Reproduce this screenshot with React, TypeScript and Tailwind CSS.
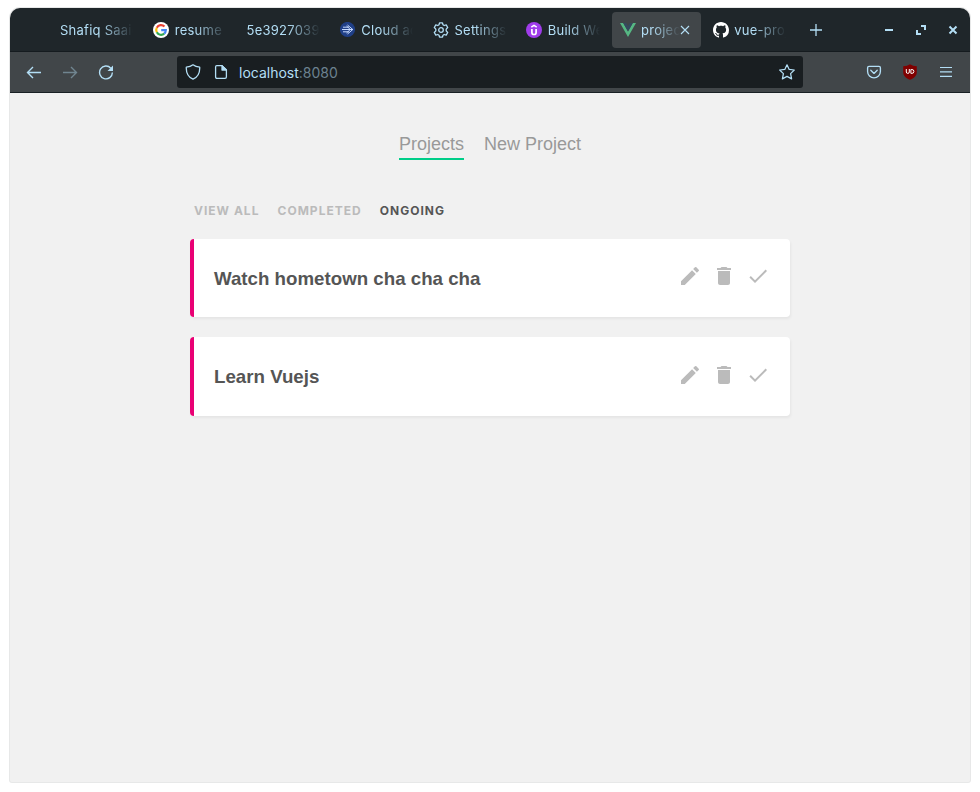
import React from 'react';

type Tab = { title: string; icon?: React.ReactNode; active?: boolean };

const GoogleIcon = () => (
  <svg width="16" height="16" viewBox="0 0 16 16">
    <circle cx="8" cy="8" r="8" fill="#fff" />
    <g fill="none" strokeWidth="2.2">
      <path d="M11.5 4.6A4.8 4.8 0 0 0 3.8 5.7" stroke="#ea4335" />
      <path d="M3.8 5.7A4.8 4.8 0 0 0 3.8 10.3" stroke="#fbbc05" />
      <path d="M3.8 10.3A4.8 4.8 0 0 0 11.2 11.6" stroke="#34a853" />
      <path d="M11.2 11.6A4.8 4.8 0 0 0 12.8 8.2H8.2" stroke="#4285f4" />
    </g>
  </svg>
);

const CloudIcon = () => (
  <svg width="16" height="16" viewBox="0 0 16 16">
    <circle cx="7.5" cy="7.5" r="7.6" fill="#1f3f87" />
    <path d="M3 5.2H9M2 7.5H13M3 9.8H9M7.5 3L12.8 7.5L7.5 12M6.5 4L10.3 7.5L6.5 11" fill="none" stroke="#c3d8ff" strokeWidth="1" />
  </svg>
);

const GearIcon = () => (
  <svg width="16" height="16" viewBox="0 0 16 16" fill="none" stroke="#b3def5" strokeWidth="1.3" strokeLinejoin="round">
    <path d="M6.5.8h3l.5 2 1.2.7 2-.6 1.5 2.6-1.5 1.6v1.8l1.5 1.6-1.5 2.6-2-.6-1.2.7-.5 2h-3l-.5-2-1.2-.7-2 .6L1.300 10.500l1.500-1.600V7.100L1.300 5.500l1.500-2.600 2 .6L6 2.800Z" />
    <circle cx="8" cy="8" r="2.300" />
  </svg>
);

const UdemyIcon = () => (
  <svg width="16" height="16" viewBox="0 0 16 16">
    <circle cx="8" cy="8" r="8" fill="#a03ceb" />
    <path d="M5.300 5.200L8 3.400L10.700 5.200" fill="none" stroke="#fff" strokeWidth="1.500" />
    <path d="M5.900 7V10.400a2.100 2.100 0 0 0 4.200 0V7" fill="none" stroke="#fff" strokeWidth="1.700" />
  </svg>
);

const VueIcon = () => (
  <svg width="16" height="16" viewBox="0 0 16 16">
    <path d="M0 1.100H3.200L8 9.400L12.800 1.100H16L8 14.900Z" fill="#56b783" />
    <path d="M3.200 1.100H6.200L8 4.200L9.800 1.100H12.800L8 9.400Z" fill="#35495e" />
  </svg>
);

const GithubIcon = () => (
  <svg width="16" height="16" viewBox="0 0 16 16" fill="#fff">
    <path d="M8 0C3.58 0 0 3.58 0 8c0 3.54 2.29 6.53 5.47 7.59.4.07.55-.17.55-.38 0-.19-.01-.82-.01-1.49-2.01.37-2.53-.49-2.69-.94-.09-.23-.48-.94-.82-1.13-.28-.15-.68-.52-.01-.53.63-.01 1.08.58 1.23.82.72 1.21 1.87.87 2.33.66.07-.52.28-.87.51-1.07-1.78-.2-3.64-.89-3.64-3.95 0-.87.31-1.59.82-2.15-.08-.2-.36-1.02.08-2.12 0 0 .67-.21 2.2.82.64-.18 1.32-.27 2-.27s1.36.09 2 .27c1.53-1.04 2.2-.82 2.2-.82.44 1.1.16 1.92.08 2.12.51.56.82 1.27.82 2.15 0 3.07-1.87 3.75-3.65 3.95.29.25.54.73.54 1.48 0 1.07-.01 1.93-.01 2.2 0 .21.15.46.55.38A8.01 8.01 0 0 0 16 8c0-4.42-3.58-8-8-8Z" />
  </svg>
);

const tabs: Tab[] = [
  { title: 'Shafiq Saaid' },
  { title: 'resume -', icon: <GoogleIcon /> },
  { title: '5e3927039' },
  { title: 'Cloud aca', icon: <CloudIcon /> },
  { title: 'Settings', icon: <GearIcon /> },
  { title: 'Build We', icon: <UdemyIcon /> },
  { title: 'project', icon: <VueIcon />, active: true },
  { title: 'vue-proj', icon: <GithubIcon /> },
];

const TabItem = ({ title, icon, active }: Tab) => (
  <div className={`mx-[2px] flex h-9 w-[89.250px] shrink-0 items-center rounded-[4px] pl-2 ${active ? 'bg-[#414649]' : ''}`}>
    {icon && <span className="mr-[5.500px] h-4 w-4 shrink-0">{icon}</span>}
    <span
      className={`overflow-hidden whitespace-nowrap pt-[2px] text-[13px] tracking-[0.250px] text-[#b3def5] ${active ? 'w-[39px] [mask-image:linear-gradient(to_left,transparent,black_28px)]' : icon ? 'w-[52px] [mask-image:linear-gradient(to_left,transparent,black_32px)]' : 'w-[73px] [mask-image:linear-gradient(to_left,transparent,black_32px)]'}`}
    >
      {title}
    </span>
    {active && (
      <svg width="10" height="10" viewBox="0 0 10 10" className="shrink-0" stroke="#b3def5" strokeWidth="1.100">
        <path d="M1 1L9 9M9 1L1 9" />
      </svg>
    )}
  </div>
);

const Toolbar = () => (
  <div className="flex h-[41px] items-center border-b border-[#192024] bg-[#414649] text-[#b3def5]">
    <div className="flex w-[167px] gap-5 pl-4">
      <svg width="16" height="16" viewBox="0 0 16 16" fill="none" stroke="currentColor" strokeWidth="1.400">
        <path d="M15 8.500H1.500M7 3L1.500 8.500L7 14" />
      </svg>
      <svg width="16" height="16" viewBox="0 0 16 16" fill="none" stroke="#708590" strokeWidth="1.400">
        <path d="M1 8.500H14.500M9 3L14.500 8.500L9 14" />
      </svg>
      <svg width="16" height="16" viewBox="0 0 16 16" fill="none" stroke="currentColor" strokeWidth="1.400">
        <path d="M12.800 4.200A6.400 6.400 0 1 0 14.400 8.500" />
        <path d="M15 1.500V7H9.500Z" fill="currentColor" stroke="none" />
      </svg>
    </div>
    <div className="flex h-8 w-[626px] items-center rounded-[3px] bg-[#191e21] pl-2 pr-2">
      <svg width="16" height="16" viewBox="0 0 16 16" fill="none" stroke="currentColor" strokeWidth="1.300" strokeLinejoin="round">
        <path d="M8 .8C6 2.400 4 3 1.300 3.200C1 9 3 13 8 15.200C13 13 15 9 14.700 3.200C12 3 10 2.400 8 .8Z" />
      </svg>
      <svg width="16" height="16" viewBox="0 0 16 16" fill="none" stroke="currentColor" strokeWidth="1.300" strokeLinejoin="round" className="ml-3">
        <path d="M3.700 1.600H9L13.400 6V13Q13.400 14.400 12 14.400H4Q2.600 14.400 2.600 13V3Q2.600 1.600 3.700 1.600Z" />
        <path d="M9 1.600V6H13.400Z" fill="currentColor" />
      </svg>
      <span className="ml-[10px] flex-1 text-[14px]">
        localhost<span className="text-[#6c8290]">:8080</span>
      </span>
      <svg width="16" height="16" viewBox="0 0 16 16" fill="none" stroke="currentColor" strokeWidth="1.250" strokeLinejoin="round">
        <path d="M8 .8L10.200 5.400L15.300 6L11.600 9.600L12.600 14.900L8 12.400L3.400 14.900L4.400 9.600L.7 6L5.800 5.400Z" />
      </svg>
    </div>
    <div className="ml-auto flex gap-5 pr-4">
      <svg width="16" height="16" viewBox="0 0 16 16" fill="none" stroke="currentColor" strokeWidth="1.350" strokeLinecap="round" strokeLinejoin="round">
        <path d="M3 2.300H13Q14.400 2.300 14.400 3.700V7.500A6.400 6.400 0 0 1 1.600 7.500V3.700Q1.600 2.300 3 2.300Z" />
        <path d="M4.800 6.300L8 9.400L11.200 6.300" />
      </svg>
      <svg width="16" height="16" viewBox="0 0 16 16">
        <path d="M8 .2C6 1.500 4 2 1.200 2.200V8C1.200 12 4 14.300 8 15.800C12 14.300 14.800 12 14.800 8V2.200C12 2 10 1.500 8 .2Z" fill="#800000" />
        <path d="M4.300 5V8Q4.300 9.400 5.800 9.400Q7.300 9.400 7.300 8V5M8.900 5.500V9.400H9.800Q11.900 9.400 11.900 7.400Q11.900 5.500 9.800 5.500Z" fill="none" stroke="#fff" strokeWidth="1" />
      </svg>
      <svg width="16" height="16" viewBox="0 0 16 16" stroke="currentColor" strokeWidth="1.200">
        <path d="M2 3.500H14M2 7.800H14M2 12.300H14" />
      </svg>
    </div>
  </div>
);

const Card = ({ title, tall }: { title: string; tall?: boolean }) => (
  <article
    className={`mb-5 flex items-center justify-between rounded-[4px] border-l-4 border-[#e90074] bg-white pl-5 pr-[22px] shadow-[1px_2px_3px_rgba(0,0,0,0.050)] ${tall ? 'h-[79px]' : 'h-[78px]'}`}
  >
    <h3 className={`font-['Liberation_Sans',sans-serif] text-[18.720px] font-bold leading-[22px] text-[#555] ${tall ? '' : 'pt-[2px]'}`}>{title}</h3>
    <div className={`flex gap-[14px] text-[#bbb] ${tall ? 'pb-[3px]' : 'pb-1'}`}>
      <svg width="20" height="20" viewBox="2 2 20 20" fill="currentColor">
        <path d="M3 17.250V21h3.750L17.810 9.940l-3.750-3.750L3 17.250zM20.710 7.040a1 1 0 0 0 0-1.410l-2.340-2.340a1 1 0 0 0-1.410 0l-1.830 1.830 3.750 3.750 1.830-1.830z" />
      </svg>
      <svg width="20" height="20" viewBox="2 2 20 20" fill="currentColor">
        <path d="M6 19c0 1.100.9 2 2 2h8c1.100 0 2-.9 2-2V7H6v12zM19 4h-3.500l-1-1h-5l-1 1H5v2h14V4z" />
      </svg>
      <svg width="20" height="20" viewBox="2 2 20 20" fill="currentColor">
        <path d="M9 16.170L4.830 12l-1.420 1.410L9 19 21 7l-1.410-1.410z" />
      </svg>
    </div>
  </article>
);

export default function App() {
  return (
    <div className="h-[792px] w-[980px] overflow-hidden bg-white px-[10px] pt-2 font-[Inter,sans-serif]">
      <div className="h-[774px] rounded-[10px] rounded-b-[2px] bg-[#f1f1f1] shadow-[0_0_0_1px_#e7e8e8]">
        <header className="overflow-hidden rounded-t-[10px]">
          <div className="flex h-11 items-center border-b border-[#151b1f] bg-[#1f262a] pl-10">
            {tabs.map((tab) => (
              <TabItem key={tab.title} {...tab} />
            ))}
            <svg width="12" height="12" viewBox="0 0 12 12" className="ml-[13.600px] mt-px" stroke="#b3def5" strokeWidth="1.300">
              <path d="M6 0V12M0 6H12" />
            </svg>
            <div className="ml-auto mr-3 flex items-center gap-[22px] text-[#b3def5]">
              <svg width="10" height="10" viewBox="0 0 10 10" stroke="currentColor" strokeWidth="2">
                <path d="M1 5H9" />
              </svg>
              <svg width="10" height="10" viewBox="0 0 10 10" fill="none" stroke="currentColor" strokeWidth="2">
                <path d="M5 1H9V5M1 5V9H5" />
              </svg>
              <svg width="10" height="10" viewBox="0 0 10 10" stroke="currentColor" strokeWidth="2">
                <path d="M1.500 1.500L8.500 8.500M8.500 1.500L1.500 8.500" />
              </svg>
            </div>
          </div>
          <Toolbar />
        </header>
        <main>
          <nav className="flex justify-center gap-5 pt-[41px] font-['Liberation_Sans',sans-serif] text-[18px] leading-[21px] text-[#999]">
            <a className="h-[26px] border-b-2 border-[#00ce89]">Projects</a>
            <a>New Project</a>
          </nav>
          <section className="mx-auto w-[600px] pt-[43px]">
            <nav className="mb-[20px] flex h-4 gap-[18.100px] pl-1 text-[12px] font-bold uppercase leading-4 tracking-[1px] text-[#bbb]">
              <button className="uppercase">View all</button>
              <button className="uppercase">Completed</button>
              <button className="uppercase text-[#555]">Ongoing</button>
            </nav>
            <Card title="Watch hometown cha cha cha" />
            <Card title="Learn Vuejs" tall />
          </section>
        </main>
      </div>
    </div>
  );
}
